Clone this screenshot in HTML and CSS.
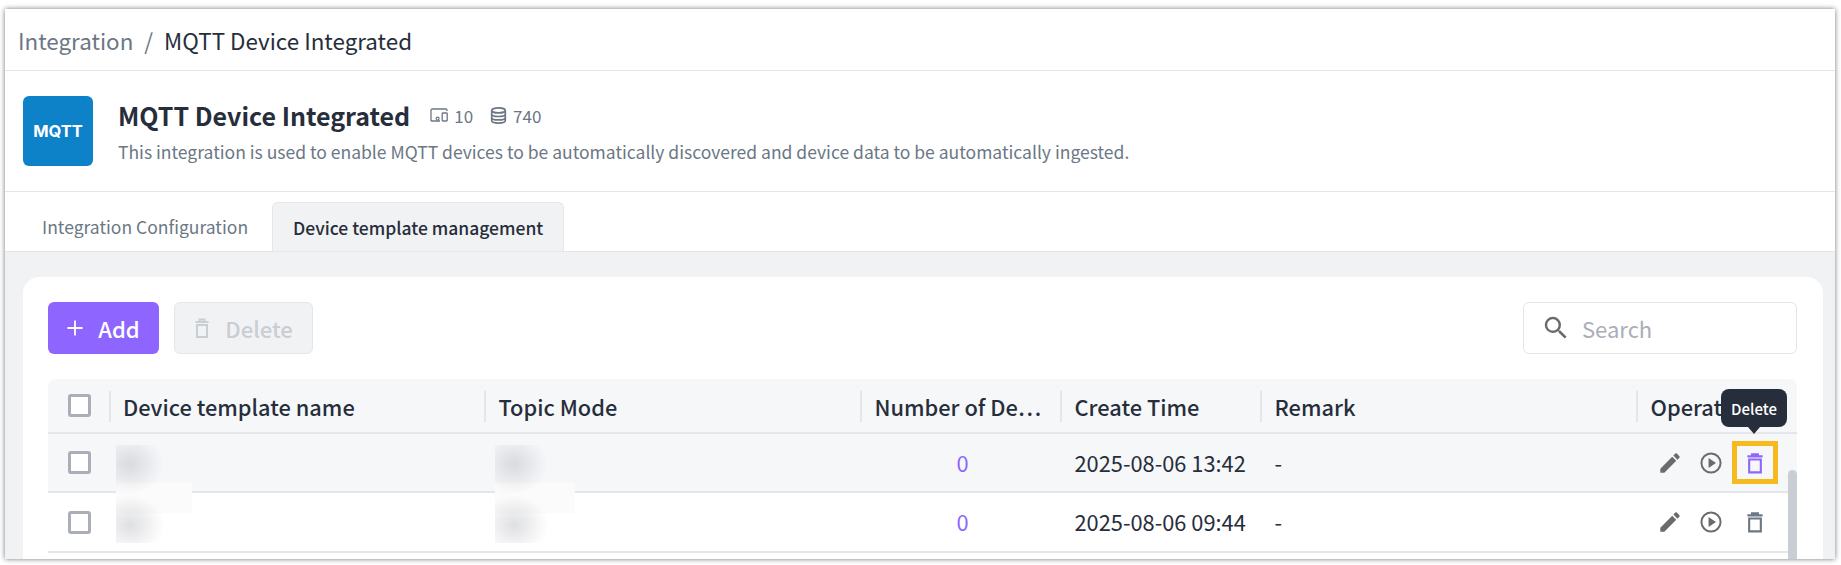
FILE: index.html
```html
<!DOCTYPE html>
<html lang="en">
<head>
    <meta charset="UTF-8">
    <title>MQTT Device Integrated</title>
    <link rel="stylesheet" href="styles.css">
</head>
<body>

<div class="window">
    <div class="breadcrumb">
        <span class="crumb-parent">Integration</span>
        <span class="crumb-sep">/</span>
        <span class="crumb-current">MQTT Device Integrated</span>
    </div>

    <div class="integration-head">
        <div class="logo">MQTT</div>
        <div class="integration-info">
            <div class="title-line">
                <h1>MQTT Device Integrated</h1>
                <svg class="stat-icon" viewBox="0 0 18 14"><path d="M1 13V2.2C1 1.5 1.5 1 2.2 1h13.6c.7 0 1.2.5 1.2 1.2V3M1 13h9" fill="none" stroke="currentColor" stroke-width="1.3"/><circle cx="7.6" cy="10.6" r="1.5" fill="none" stroke="currentColor" stroke-width="1.2"/><rect x="12.2" y="5" width="5" height="8" rx=".8" fill="none" stroke="currentColor" stroke-width="1.3"/></svg>
                <span class="stat">10</span>
                <svg class="stat-icon db" viewBox="0 0 17 17"><ellipse cx="8.5" cy="3.4" rx="6.8" ry="2.5" fill="none" stroke="currentColor" stroke-width="1.7"/><path d="M1.7 3.4v10.2c0 1.4 3 2.5 6.8 2.5s6.8-1.1 6.8-2.5V3.4M1.7 7c0 1.4 3 2.5 6.8 2.5s6.8-1.1 6.8-2.5M1.7 10.4c0 1.4 3 2.5 6.8 2.5s6.8-1.1 6.8-2.5" fill="none" stroke="currentColor" stroke-width="1.7"/></svg>
                <span class="stat">740</span>
            </div>
            <p class="desc">This integration is used to enable MQTT devices to be automatically discovered and device data to be automatically ingested.</p>
        </div>
    </div>

    <div class="tabs">
        <div class="tab">Integration Configuration</div>
        <div class="tab active">Device template management</div>
    </div>

    <div class="content">
        <div class="card">
            <div class="toolbar">
                <button class="btn btn-add"><svg viewBox="0 0 24 24"><path d="M12 4.5v15M4.5 12h15" fill="none" stroke="currentColor" stroke-width="1.8"/></svg>Add</button>
                <button class="btn btn-delete"><svg viewBox="0 0 24 24"><path d="M5.5 6h13M9.5 6V3.5h5V6M7 9h10v12H7z" fill="none" stroke="currentColor" stroke-width="2"/></svg>Delete</button>
                <div class="search">
                    <svg viewBox="0 0 24 24"><path d="M15.5 14h-.79l-.28-.27A6.471 6.471 0 0 0 16 9.5 6.5 6.5 0 1 0 9.5 16c1.61 0 3.09-.59 4.23-1.57l.27.28v.79l5 4.99L20.49 19l-4.99-5zm-6 0C7.01 14 5 11.99 5 9.5S7.01 5 9.5 5 14 7.01 14 9.5 11.99 14 9.5 14z" fill="currentColor"/></svg>
                    <span>Search</span>
                </div>
            </div>

            <div class="table">
                <div class="row head">
                    <div class="cell"><span class="check"></span></div>
                    <div class="cell th">Device template name</div>
                    <div class="cell th">Topic Mode</div>
                    <div class="cell th">Number of De⋯</div>
                    <div class="cell th">Create Time</div>
                    <div class="cell th">Remark</div>
                    <div class="cell th">Operation</div>
                </div>
                <div class="row hover">
                    <div class="cell"><span class="check"></span></div>
                    <div class="cell"></div>
                    <div class="cell"></div>
                    <div class="cell count">0</div>
                    <div class="cell">2025-08-06 13:42</div>
                    <div class="cell">-</div>
                    <div class="cell ops">
                        <svg class="op" viewBox="-1 -1 26 26"><path d="M3 17.25V21h3.75L17.81 9.94l-3.75-3.75L3 17.25zM20.71 7.04a1 1 0 0 0 0-1.41l-2.34-2.34a1 1 0 0 0-1.41 0l-1.83 1.83 3.75 3.75 1.83-1.83z" fill="currentColor"/></svg>
                        <svg class="op" viewBox="0 0 24 24"><circle cx="12" cy="12" r="8.2" fill="none" stroke="currentColor" stroke-width="1.7"/><path d="M9.9 7.8v8.4l6.4-4.2z" fill="currentColor"/></svg>
                        <svg class="op trash active" viewBox="0 0 24 24"><path d="M5.5 6.3h13M9.5 6V4.6h5V6M7 9h10v11H7z" fill="none" stroke="currentColor" stroke-width="1.8"/></svg>
                    </div>
                </div>
                <div class="row">
                    <div class="cell"><span class="check"></span></div>
                    <div class="cell"></div>
                    <div class="cell"></div>
                    <div class="cell count">0</div>
                    <div class="cell">2025-08-06 09:44</div>
                    <div class="cell">-</div>
                    <div class="cell ops">
                        <svg class="op" viewBox="-1 -1 26 26"><path d="M3 17.25V21h3.75L17.81 9.94l-3.75-3.75L3 17.25zM20.71 7.04a1 1 0 0 0 0-1.41l-2.34-2.34a1 1 0 0 0-1.41 0l-1.83 1.83 3.75 3.75 1.83-1.83z" fill="currentColor"/></svg>
                        <svg class="op" viewBox="0 0 24 24"><circle cx="12" cy="12" r="8.2" fill="none" stroke="currentColor" stroke-width="1.7"/><path d="M9.9 7.8v8.4l6.4-4.2z" fill="currentColor"/></svg>
                        <svg class="op trash" viewBox="0 0 24 24"><path d="M5.5 6.3h13M9.5 6V4.6h5V6M7 9h10v11H7z" fill="none" stroke="currentColor" stroke-width="1.8"/></svg>
                    </div>
                </div>

                <!-- blurred names -->
                <div class="smudge smudge-name"></div>
                <div class="smudge smudge-topic"></div>

                <div class="scrollbar"></div>
                <div class="tooltip">Delete</div>
                <div class="highlight"></div>
            </div>
        </div>
    </div>
</div>

</body>
</html>
```

FILE: styles.css
```css
* {
    box-sizing: border-box;
}
html, body {
    height: 100%;
}
body {
    margin: 0;
    background-color: white;
    overflow: hidden;
    font-family: "Noto Sans CJK SC", "Noto Sans", sans-serif;
    color: #272e3b;
}
.window {
    margin: 9px 6px 0 5px;
    height: 550px;
    background-color: white;
    box-shadow: 0 0 5px rgba(0, 0, 0, 0.55);
    overflow: hidden;
    display: flex;
    flex-direction: column;
}
.breadcrumb {
    height: 62px;
    flex: none;
    padding-left: 13px;
    display: flex;
    align-items: center;
    font-size: 22.4px;
    border-bottom: 1px solid #e5e6eb;
}
.crumb-parent {
    color: #6b7785;
}
.crumb-sep {
    color: #6b7785;
    margin: 0 11px;
}
.integration-head {
    height: 121px;
    flex: none;
    padding-left: 18px;
    display: flex;
    align-items: center;
    gap: 25px;
    border-bottom: 1px solid #e5e6eb;
}
.logo {
    width: 70px;
    height: 70px;
    border-radius: 6px;
    background-color: #0e82c8;
    color: white;
    font-family: Inter, sans-serif;
    font-weight: 700;
    font-size: 16.5px;
    display: flex;
    align-items: center;
    justify-content: center;
}
.integration-info {
    padding-top: 2px;
}
.title-line {
    display: flex;
    align-items: center;
    height: 30px;
}
h1 {
    margin: 0 20px 0 0;
    font-size: 25px;
    font-weight: 700;
    line-height: 30px;
}
.stat-icon {
    width: 18px;
    height: 14px;
    color: #6b7785;
    margin-right: 6px;
}
.stat-icon.db {
    width: 17px;
    height: 17px;
    margin-left: 17px;
}
.stat {
    font-size: 17px;
    color: #6b7785;
}
.desc {
    margin: 10px 0 0;
    font-size: 17.5px;
    line-height: 24px;
    color: #6b7785;
}
.tabs {
    height: 60px;
    flex: none;
    display: flex;
    align-items: flex-end;
    padding-left: 17px;
    gap: 4px;
    border-bottom: 1px solid #e5e6eb;
}
.tab {
    height: 49px;
    padding: 0 20px;
    display: flex;
    align-items: center;
    font-size: 17.5px;
    color: #6b7785;
}
.tab.active {
    color: #272e3b;
    font-weight: 500;
    background-color: #f1f2f4;
    border: 1px solid #e5e6eb;
    border-bottom: none;
    border-radius: 6px 6px 0 0;
}
.content {
    flex: 1;
    background-color: #f1f2f4;
    padding: 25px 12px 0 18px;
    min-height: 0;
}
.card {
    height: 300px;
    background-color: white;
    border-radius: 16px 16px 0 0;
    padding: 25px 26px 0 25px;
}
.toolbar {
    display: flex;
    align-items: center;
    gap: 15px;
    height: 52px;
}
.btn {
    height: 52px;
    border-radius: 6px;
    font-family: inherit;
    font-size: 22px;
    font-weight: 500;
    display: flex;
    align-items: center;
    gap: 11px;
    padding: 0 4px 0 0;
}
.btn svg {
    width: 24px;
    height: 24px;
}
.btn-add {
    width: 111px;
    justify-content: center;
    background-color: #8e66ff;
    border: none;
    color: white;
}
.btn-delete {
    width: 139px;
    justify-content: center;
    background-color: #f1f2f4;
    border: 1px solid #e5e6eb;
    color: #c9cdd4;
}
.search {
    margin-left: auto;
    width: 274px;
    height: 52px;
    border: 1px solid #e5e6eb;
    border-radius: 6px;
    display: flex;
    align-items: center;
    gap: 11px;
    padding-left: 17px;
    font-size: 22px;
    color: #a9aeb8;
}
.search svg {
    width: 30px;
    height: 30px;
    color: #6b6b6b;
}
.table {
    position: relative;
    margin-top: 25px;
}
.row {
    display: grid;
    grid-template-columns: 60.5px 375.5px 376px 200px 200px 376px 161.5px;
    height: 60px;
    border-bottom: 2px solid #e5e6eb;
    font-size: 21.8px;
    line-height: 28px;
}
.row.head {
    height: 55px;
    background-color: #f6f7f9;
    border-radius: 8px 8px 0 0;
}
.row.hover {
    height: 59px;
    background-color: #f6f7f9;
}
.cell {
    display: flex;
    align-items: center;
    padding-left: 14.5px;
    white-space: nowrap;
    overflow: hidden;
}
.cell:first-child {
    padding-left: 20px;
}
.th {
    position: relative;
    padding-top: 2px;
    font-weight: 500;
}
.th::before {
    content: "";
    position: absolute;
    left: 0;
    top: 12px;
    bottom: 10px;
    width: 2px;
    background-color: #e5e6eb;
}
.check {
    width: 23px;
    height: 23px;
    border: 3px solid #a9aeb8;
    border-radius: 3px;
    background-color: white;
}
.count {
    justify-content: center;
    padding-left: 5px;
    color: #8e66ff;
}
.ops {
    padding-left: 19.5px;
    gap: 13.5px;
}
.op {
    flex: none;
    width: 28px;
    height: 28px;
    color: #6b6b6b;
}
.trash {
    color: #6b7785;
    margin-left: 2px;
}
.trash.active {
    color: #8e66ff;
}
.smudge {
    position: absolute;
    top: 66px;
    height: 98px;
    background-repeat: no-repeat;
    background-image:
        radial-gradient(ellipse 34px 30px at var(--blob) 19px, rgba(170, 172, 182, 0.38), rgba(170, 172, 182, 0) 100%),
        radial-gradient(ellipse 34px 30px at var(--blob) 80px, rgba(170, 172, 182, 0.38), rgba(170, 172, 182, 0) 100%),
        linear-gradient(#fbfbfb, #fbfbfb);
    background-size: 100% 100%, 100% 100%, 100% 30px;
    background-position: 0 0, 0 0, 0 38px;
}
.smudge-name {
    --blob: 14px;
    left: 68px;
    width: 76px;
}
.smudge-topic {
    --blob: 19px;
    left: 447px;
    width: 80px;
}
.scrollbar {
    position: absolute;
    right: 0;
    top: 91px;
    width: 9px;
    height: 100px;
    border-radius: 5px 5px 0 0;
    background-color: #c9cdd4;
}
.tooltip {
    position: absolute;
    left: 1673px;
    top: 10px;
    width: 66px;
    height: 38px;
    border-radius: 8px;
    background-color: #272e3b;
    color: white;
    font-size: 15px;
    font-weight: 500;
    display: flex;
    align-items: center;
    justify-content: center;
}
.tooltip::after {
    content: "";
    position: absolute;
    left: 27px;
    top: 38px;
    border: 6px solid transparent;
    border-top: 7px solid #272e3b;
    border-bottom: none;
}
.highlight {
    position: absolute;
    left: 1684px;
    top: 62px;
    width: 46px;
    height: 43px;
    border: 5px solid #f6b91e;
}
```
